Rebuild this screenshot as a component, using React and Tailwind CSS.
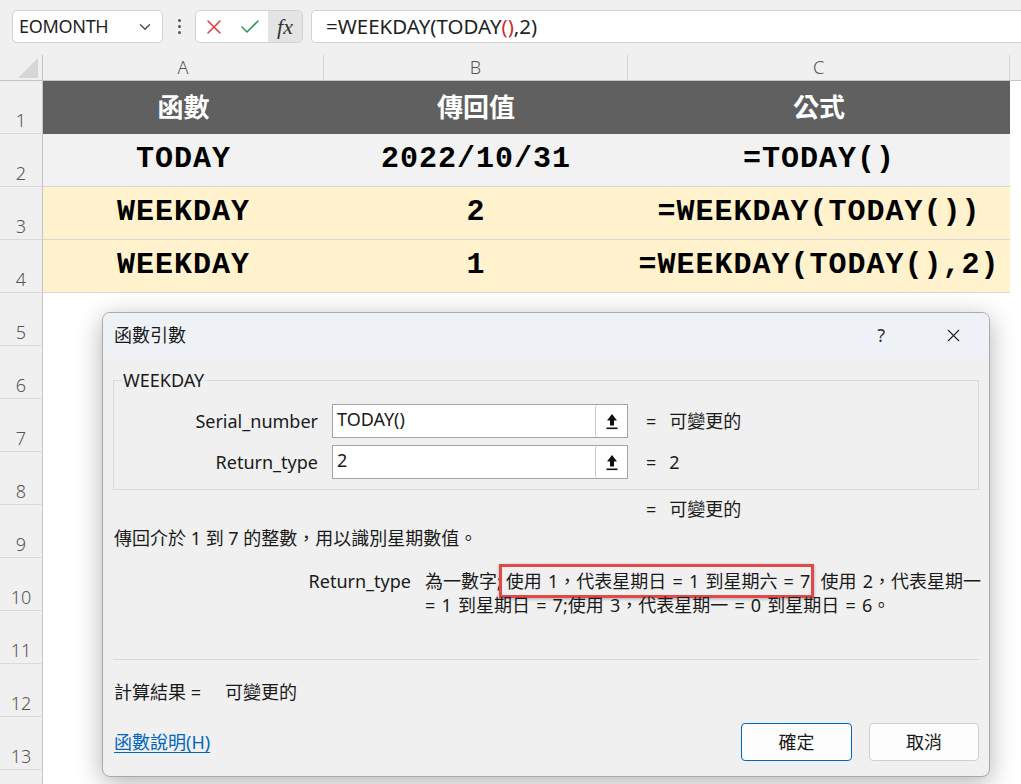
import { X, Check, ChevronDown } from "lucide-react";

// column widths of the sheet (A, B, C), the rest goes to D
const cols = [
  { key: "A", w: "w-[281px]" },
  { key: "B", w: "w-[304px]" },
  { key: "C", w: "w-[382px]" },
];

const dataRows = [
  { n: 1, bg: "bg-[#606060]", head: true, cells: ["函數", "傳回值", "公式"] },
  { n: 2, bg: "bg-[#f2f2f2]", cells: ["TODAY", "2022/10/31", "=TODAY()"] },
  { n: 3, bg: "bg-[#fff2cc]", cells: ["WEEKDAY", "2", "=WEEKDAY(TODAY())"] },
  { n: 4, bg: "bg-[#fff2cc]", cells: ["WEEKDAY", "1", "=WEEKDAY(TODAY(),2)"] },
];

const emptyRows = [5, 6, 7, 8, 9, 10, 11, 12, 13];

function RefButton() {
  return (
    <div className="w-[32px] h-full border-l border-[#c9c9c9] rounded-[3px] bg-white flex items-center justify-center">
      <svg width="12" height="17" viewBox="0 0 12 17">
        <polygon points="6,1 11,7.5 8,7.5 8,12.5 4,12.5 4,7.5 1,7.5" fill="#111" />
        <rect x="0.5" y="14.5" width="11" height="1.6" fill="#111" />
      </svg>
    </div>
  );
}

function ArgRow({ label, value, result }) {
  return (
    <div className="flex items-center h-[34px]">
      <div className="w-[204px] text-right">{label}</div>
      <div className="ml-[14px] w-[296px] h-[34px] border border-[#a3a3a3] bg-white flex">
        <div className="flex-1 pl-[4px] pt-[2px] leading-[24px]">{value}</div>
        <RefButton />
      </div>
      <div className="ml-[18px]">=</div>
      <div className="ml-[13px]">{result}</div>
    </div>
  );
}

function RowLabel({ n }) {
  return (
    <div className="w-[43px] bg-[#f0f0f0] border-r border-b border-r-[#c4c4c4] border-b-[#dadada] flex items-end justify-center pb-[4px] font-['Noto_Sans',sans-serif] text-[18px] leading-[18px] font-light text-[#555]">
      {n}
    </div>
  );
}

function FormulaBar() {
  return (
    <div className="h-[55px] bg-[#f0f0f0] flex items-start pt-[10px] pl-[12px] font-['Noto_Sans',sans-serif] text-[#1f1f1f]">
      <div className="w-[151px] h-[33px] bg-white border border-[#d2d2d2] rounded-[5px] flex items-center pl-[6px] pr-[8px] text-[18px]">
        <span className="tracking-[-0.3px]">EOMONTH</span>
        <ChevronDown className="ml-auto text-[#444]" size={18} strokeWidth={1.6} />
      </div>
      <div className="w-[32px] h-[33px] flex flex-col items-center justify-center gap-[3px]">
        <span className="w-[3px] h-[3px] rounded-full bg-[#555]" />
        <span className="w-[3px] h-[3px] rounded-full bg-[#555]" />
        <span className="w-[3px] h-[3px] rounded-full bg-[#555]" />
      </div>
      <div className="w-[108px] h-[33px] bg-white border border-[#d2d2d2] rounded-[5px] flex items-center overflow-hidden">
        <div className="w-[36px] flex justify-center">
          <X size={24} strokeWidth={1.5} className="text-[#e0393e]" />
        </div>
        <div className="w-[36px] flex justify-center">
          <Check size={24} strokeWidth={1.6} className="text-[#2b9a51]" />
        </div>
        <div className="flex-1 h-full bg-[#e4e4e4] flex items-center justify-center font-['Liberation_Serif',serif] italic text-[22px] text-[#333]">
          fx
        </div>
      </div>
      <div className="ml-[8px] flex-1 h-[33px] bg-white border border-r-0 border-[#d2d2d2] rounded-l-[5px] flex items-center pl-[14px] text-[20.5px]">
        <span>=WEEKDAY(TODAY</span>
        <span className="text-[#d42a2a]">()</span>
        <span>,2)</span>
      </div>
    </div>
  );
}

function Sheet() {
  return (
    <div>
      <div className="flex h-[26px] bg-[#f0f0f0] border-b border-[#c4c4c4] font-['Noto_Sans',sans-serif] text-[18px] text-[#555]">
        <div className="w-[43px] border-r border-[#c4c4c4] relative">
          <svg className="absolute left-0 top-0" width="43" height="26" viewBox="0 0 43 26">
            <polygon points="38,3 38,23 18,23" fill="#d6d6d6" />
          </svg>
        </div>
        {cols.map((c) => (
          <div key={c.key} className={`${c.w} border-r border-[#d6d6d6] flex items-center justify-center font-light`}>
            {c.key}
          </div>
        ))}
        <div className="flex-1" />
      </div>

      {dataRows.map((r) => (
        <div key={r.n} className="flex h-[53px]">
          <RowLabel n={r.n} />
          {r.cells.map((t, i) => (
            <div
              key={i}
              className={`${cols[i].w} ${r.bg} ${
                r.head
                  ? "pb-[4px] font-['Noto_Sans_CJK_TC',sans-serif] font-bold text-[26px] text-white"
                  : "border-b border-[#d8d8d8] pb-[2px] font-['Liberation_Mono',monospace] font-bold text-[30px] tracking-[1px] text-black"
              } flex items-center justify-center`}
            >
              {t}
            </div>
          ))}
          <div className="flex-1 bg-white" />
        </div>
      ))}

      {emptyRows.map((n) => (
        <div key={n} className="flex h-[53px]">
          <RowLabel n={n} />
          <div className="flex-1 bg-white" />
        </div>
      ))}
      <div className="flex h-[53px]">
        <div className="w-[43px] bg-[#f0f0f0] border-r border-[#c4c4c4]" />
        <div className="flex-1 bg-white" />
      </div>
    </div>
  );
}

function ArgsDialog() {
  return (
    <div className="absolute left-[102px] top-[312px] w-[888px] h-[465px] rounded-[8px] border border-[#a9a9a9] bg-[#f0f0f0] shadow-[0_6px_26px_rgba(0,0,0,0.3)] overflow-hidden flex flex-col font-['Noto_Sans','Noto_Sans_CJK_TC',sans-serif] text-[18px] leading-[24px] text-[#1a1a1a]">
      <div className="h-[44px] shrink-0 bg-[#eef2f7] flex items-center pl-[11px] pr-[25px]">
        <span>函數引數</span>
        <span className="ml-auto text-[18px] text-[#333]">?</span>
        <X className="ml-[58px] text-[#222]" size={21} strokeWidth={1.3} />
      </div>

      <div className="flex-1 flex flex-col px-[10px]">
        {/* argument group */}
        <div className="relative mt-[23px] h-[110px] border border-[#d9d9d9] pt-[23px] flex flex-col gap-[7px]">
          <span className="absolute left-[8px] -top-[13px] bg-[#f0f0f0] px-px">WEEKDAY</span>
          <ArgRow label="Serial_number" value="TODAY()" result="可變更的" />
          <ArgRow label="Return_type" value="2" result="2" />
        </div>

        <div className="mt-[7px] pl-[533px] flex">
          <span>=</span>
          <span className="ml-[13px]">可變更的</span>
        </div>

        <div className="mt-[5px] pl-px">傳回介於 1 到 7 的整數，用以識別星期數值。</div>

        <div className="mt-[19px] flex">
          <div className="w-[298px] text-right shrink-0">Return_type</div>
          <div className="ml-[14px] whitespace-nowrap [word-spacing:1.5px]">
            為一數字;
            <span className="inline-block -ml-[3px] -my-[5px] pl-[4px] pr-[1px] py-[2px] border-[3px] border-[#e24848] shadow-[0_1px_3px_rgba(0,0,0,0.3)]">
              使用 1，代表星期日 = 1 到星期六 = 7
            </span>{" "}
            使用 2，代表星期一
            <br />= 1 到星期日 = 7;使用 3，代表星期一 = 0 到星期日 = 6。
          </div>
        </div>

        <div className="mt-[42px] border-t border-[#dadada]" />

        <div className="mt-[20px] pl-px flex">
          <span>計算結果 =</span>
          <span className="ml-[24px]">可變更的</span>
        </div>

        <div className="mt-[19px] flex items-center">
          <a className="pl-px text-[#0067c0] underline underline-offset-[3px] decoration-1">函數說明(H)</a>
          <button className="ml-auto w-[111px] h-[38px] rounded-[4px] border border-[#0067c0] bg-[#fdfdfd]">確定</button>
          <button className="ml-[17px] w-[110px] h-[38px] rounded-[4px] border border-[#d0d0d0] bg-[#fdfdfd]">取消</button>
        </div>
      </div>
    </div>
  );
}

export default function App() {
  return (
    <div className="relative w-[1021px] h-[784px] overflow-hidden bg-white">
      <FormulaBar />
      <Sheet />
      <ArgsDialog />
    </div>
  );
}
